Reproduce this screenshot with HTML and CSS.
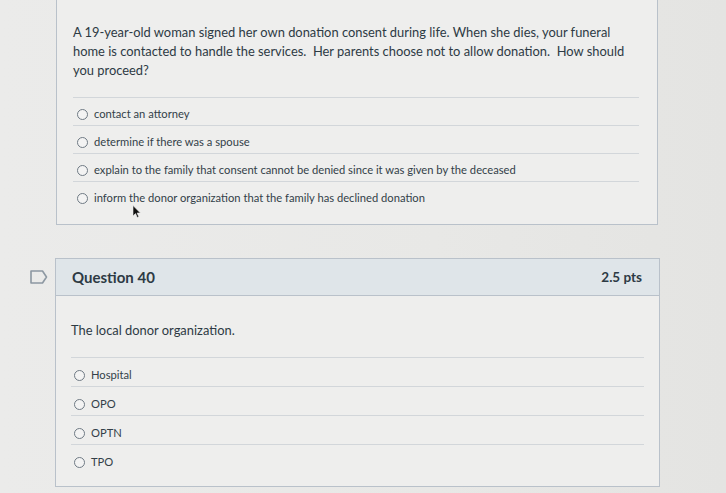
FILE: index.html
```html
<!DOCTYPE html>
<html>
<head>
<meta charset="utf-8">
<link rel="stylesheet" href="styles.css">
</head>
<body>
<div class="page">
  <div class="card card-prev">
    <div class="q-body">
      <div class="q-text">A 19-year-old woman signed her own donation consent during life. When she dies, your funeral home is contacted to handle the services.&nbsp; Her parents choose not to allow donation.&nbsp; How should you proceed?</div>
      <div class="answers">
        <div class="answer"><span class="radio"></span><span>contact an attorney</span></div>
        <div class="answer"><span class="radio"></span><span>determine if there was a spouse</span></div>
        <div class="answer"><span class="radio"></span><span>explain to the family that consent cannot be denied since it was given by the deceased</span></div>
        <div class="answer"><span class="radio"></span><span>inform the donor organization that the family has declined donation</span></div>
      </div>
    </div>
    <svg class="cursor" width="9" height="13" viewBox="0 0 9 13"><path d="M1 0.5 L1 11 L3.5 8.6 L5.3 12.5 L6.8 11.8 L5.1 8 L8.4 8 Z" fill="#111" stroke="#eee" stroke-width="0.6"/></svg>
  </div>

  <div class="card card-q40">
    <svg class="flag" width="18" height="14" viewBox="0 0 18 14"><path d="M1 1 H12.5 L16.5 7 L12.5 13 H1 Z" fill="none" stroke="#8d98a2" stroke-width="1.6" stroke-linejoin="round"/></svg>
    <div class="q-header">
      <span class="q-title">Question 40</span>
      <span class="q-pts">2.5 pts</span>
    </div>
    <div class="q-body q-body2">
      <div class="q-text">The local donor organization.</div>
      <div class="answers">
        <div class="answer"><span class="radio"></span><span>Hospital</span></div>
        <div class="answer"><span class="radio"></span><span>OPO</span></div>
        <div class="answer"><span class="radio"></span><span>OPTN</span></div>
        <div class="answer"><span class="radio"></span><span>TPO</span></div>
      </div>
    </div>
  </div>
</div>
</body>
</html>
```
FILE: styles.css
```css
html, body {
  margin: 0;
  padding: 0;
}
body {
  background: linear-gradient(to right, #ebebea 0%, #e8e8e6 60%, #e4e4e2 100%);
  font-family: Lato, "Noto Sans", sans-serif;
  color: #2d3a44;
  width: 726px;
  height: 493px;
  overflow: hidden;
}
.page {
  padding-left: 56px;
  width: 604px;
}
.card {
  position: relative;
  border: 1px solid #b9c1ca;
  background: #eeeeed;
}
.card-prev {
  border-top: none;
  width: 600px;
}
.q-body {
  padding: 23px 18px 15px 16px;
}
.q-text {
  font-size: 12.9px;
  line-height: 19px;
  padding-bottom: 17px;
  border-bottom: 1px solid #d2d6da;
}
.answers {
  display: flex;
  flex-direction: column;
}
.answer {
  display: flex;
  align-items: center;
  gap: 6px;
  padding: 9px 0 4px 4px;
  font-size: 11.2px;
  line-height: 14px;
  color: #333f49;
}
.answer + .answer {
  border-top: 1px solid #d2d6da;
}
.radio {
  width: 9px;
  height: 9px;
  border: 1px solid #6f7a84;
  border-radius: 50%;
  background: #f3f3f3;
  flex: none;
}
.cursor {
  position: absolute;
  left: 75px;
  top: 205px;
}
.card-q40 {
  margin-top: 33px;
  width: 603px;
  margin-left: -1px;
}
.flag {
  position: absolute;
  left: -26px;
  top: 11px;
}
.q-header {
  display: flex;
  justify-content: space-between;
  align-items: center;
  height: 36px;
  padding: 0 17px 0 16px;
  background: #dfe5e9;
  border-bottom: 1px solid #b9c1ca;
  font-weight: 700;
  color: #2d3a44;
}
.q-title {
  font-size: 15px;
}
.q-pts {
  font-size: 13.5px;
}
.q-body2 {
  padding: 25px 15px 13px 15px;
}
.q-body2 .q-text {
  padding-bottom: 17px;
}
.q-body2 .answer {
  padding: 10px 0 4px 3px;
  gap: 6px;
}
```
